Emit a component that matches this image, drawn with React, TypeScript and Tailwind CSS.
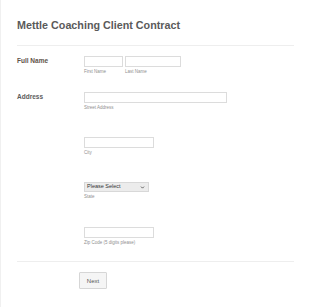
import { ChevronDown } from "lucide-react";

function SubLabel({ children }: { children: React.ReactNode }) {
  return (
    <div className="mt-[2px] text-[4.5px] leading-[5px] text-[#8f8f8f]">
      {children}
    </div>
  );
}

function TextBox({ width }: { width: string }) {
  return (
    <div className={`${width} h-[11px] border border-[#dcdcdc] bg-white`} />
  );
}

export default function App() {
  return (
    <div className="min-h-screen border-l border-[#f0f0f0] bg-white font-['Liberation_Sans',Arial,sans-serif]">
      <div className="ml-[16px] w-[277px]">
        <h1 className="pt-[20px] text-[10.75px] leading-[11px] font-bold text-[#5a5a5a]">
          Mettle Coaching Client Contract
        </h1>
        <div className="mt-[14px] border-t border-[#eeeeee]" />

        {/* full name */}
        <div className="mt-[10px] flex">
          <div className="w-[67px] pt-[2px] text-[6.5px] leading-none font-bold text-[#5e5249]">
            Full Name
          </div>
          <div className="flex gap-[2px]">
            <div>
              <TextBox width="w-[39px]" />
              <SubLabel>First Name</SubLabel>
            </div>
            <div>
              <TextBox width="w-[56px]" />
              <SubLabel>Last Name</SubLabel>
            </div>
          </div>
        </div>

        {/* address */}
        <div className="mt-[18px] flex">
          <div className="w-[67px] pt-[2px] text-[6.5px] leading-none font-bold text-[#5c5c5c]">
            Address
          </div>
          <div className="flex flex-col">
            <div>
              <TextBox width="w-[143px]" />
              <SubLabel>Street Address</SubLabel>
            </div>
            <div className="mt-[27px]">
              <TextBox width="w-[70px]" />
              <SubLabel>City</SubLabel>
            </div>
            <div className="mt-[27px]">
              <div className="flex h-[10px] w-[65px] items-center justify-between border border-[#d8d8d8] bg-[#ececec] pr-[3px] pl-[2px]">
                <span className="text-[5.5px] leading-none text-[#333]">
                  Please Select
                </span>
                <ChevronDown className="h-[5px] w-[5px] text-[#333]" strokeWidth={3.5} />
              </div>
              <SubLabel>State</SubLabel>
            </div>
            <div className="mt-[28px]">
              <TextBox width="w-[70px]" />
              <SubLabel>Zip Code (5 digits please)</SubLabel>
            </div>
          </div>
        </div>

        <div className="mt-[16px] border-t border-[#eeeeee]" />

        <div className="mt-[10px] pl-[62px]">
          <button className="flex h-[17px] w-[28px] items-center justify-center rounded-[1px] border border-[#d6d6d6] bg-[#f5f5f5] text-[6px] leading-none text-[#555]">
            Next
          </button>
        </div>
      </div>
    </div>
  );
}
